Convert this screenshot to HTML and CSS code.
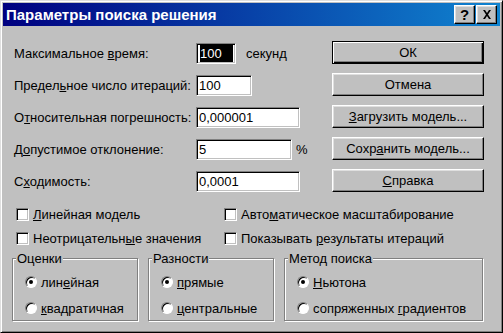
FILE: index.html
```html
<!DOCTYPE html>
<html lang="ru">
<head>
    <meta charset="UTF-8">
    <title>Параметры поиска решения</title>
    <link rel="stylesheet" href="styles.css">
</head>
<body>
    <div class="window">
        <div class="titlebar">
            <span class="title">Параметры поиска решения</span>
            <div class="title-buttons">
                <button class="title-btn">?</button>
                <button class="title-btn">
                    <svg width="10" height="9" viewBox="0 0 10 9">
                        <path d="M1 0h2l2 3 2-3h2L6 4.5 9 9H7L5 6 3 9H1l3-4.5z" fill="#000"/>
                    </svg>
                </button>
            </div>
        </div>

        <div class="content">
            <div class="params">
                <div class="fields">
                    <div class="field">
                        <span class="label">Максимальное <u>в</u>ремя:</span>
                        <span class="input w-time"><span class="selected">100</span></span>
                        <span class="unit">секунд</span>
                    </div>
                    <div class="field">
                        <span class="label">Предел<u>ь</u>ное число итераций:</span>
                        <span class="input w-iter">100</span>
                    </div>
                    <div class="field">
                        <span class="label">О<u>т</u>носительная погрешность:</span>
                        <span class="input w-wide">0,000001</span>
                    </div>
                    <div class="field">
                        <span class="label">Д<u>о</u>пустимое отклонение:</span>
                        <span class="input w-tol">5</span>
                        <span class="unit unit-pct">%</span>
                    </div>
                    <div class="field">
                        <span class="label">С<u>х</u>одимость:</span>
                        <span class="input w-wide">0,0001</span>
                    </div>
                </div>

                <div class="actions">
                    <button class="btn default">ОК</button>
                    <button class="btn">Отмена</button>
                    <button class="btn"><u>З</u>агрузить модель...</button>
                    <button class="btn">Сохр<u>а</u>нить модель...</button>
                    <button class="btn"><u>С</u>правка</button>
                </div>
            </div>

            <div class="options">
                <div class="check"><span class="box"></span><span><u>Л</u>инейная модель</span></div>
                <div class="check"><span class="box"></span><span>Авто<u>м</u>атическое масштабирование</span></div>
                <div class="check"><span class="box"></span><span>Неотрицательн<u>ы</u>е значения</span></div>
                <div class="check"><span class="box"></span><span>Показывать <u>р</u>езультаты итераций</span></div>
            </div>

            <div class="groups">
                <fieldset class="group">
                    <legend>Оценки</legend>
                    <div class="radio"><span class="dot checked"></span><span>лин<u>е</u>йная</span></div>
                    <div class="radio"><span class="dot"></span><span><u>к</u>вадратичная</span></div>
                </fieldset>
                <fieldset class="group">
                    <legend>Разности</legend>
                    <div class="radio"><span class="dot checked"></span><span><u>п</u>рямые</span></div>
                    <div class="radio"><span class="dot"></span><span><u>ц</u>ентральные</span></div>
                </fieldset>
                <fieldset class="group group-wide">
                    <legend>Метод поиска</legend>
                    <div class="radio"><span class="dot checked"></span><span><u>Н</u>ьютона</span></div>
                    <div class="radio"><span class="dot"></span><span>сопряженных <u>г</u>радиентов</span></div>
                </fieldset>
            </div>
        </div>
    </div>
</body>
</html>
```

FILE: styles.css
```css
* {
    box-sizing: border-box;
}

body {
    margin: 0;
    font-family: "Liberation Sans", Arial, sans-serif;
    font-size: 13px;
    color: #000;
    background-color: #c0c0c0;
}

u {
    text-decoration: underline;
    text-underline-offset: 1px;
}

.window {
    width: 503px;
    height: 333px;
    padding: 2px;
    background-color: #c0c0c0;
    border: 1px solid;
    border-color: #dfdfdf #000 #000 #dfdfdf;
    box-shadow: inset 1px 1px #fff, inset -1px -1px #808080;
}

.titlebar {
    display: flex;
    align-items: center;
    justify-content: space-between;
    height: 23px;
    padding: 0 3px 0 3px;
    background: linear-gradient(to right, #000080, #1084d0);
}

.title {
    color: #fff;
    font-weight: bold;
    font-size: 15px;
}

.title-buttons {
    display: flex;
    gap: 1px;
}

.title-btn {
    width: 21px;
    height: 19px;
    padding: 0;
    display: flex;
    align-items: center;
    justify-content: center;
    font-family: "Liberation Sans", Arial, sans-serif;
    font-weight: bold;
    font-size: 15px;
    background-color: #c0c0c0;
    border: 1px solid;
    border-color: #fff #000 #000 #fff;
    box-shadow: inset -1px -1px #808080, inset 1px 1px #dfdfdf;
}

.content {
    padding: 11px 0 0 11px;
}

.params {
    display: flex;
}

.fields {
    width: 318px;
}

.field {
    display: flex;
    align-items: center;
    height: 32px;
}

.label {
    width: 182px;
}

.input {
    height: 21px;
    padding: 0 2px;
    display: flex;
    align-items: center;
    background-color: #fff;
    border: 1px solid;
    border-color: #808080 #fff #fff #808080;
    box-shadow: inset 1px 1px #000, inset -1px -1px #c0c0c0;
}

.selected {
    flex: 1;
    height: 17px;
    line-height: 17px;
    margin-left: 1px;
    background-color: #000;
    color: #fff;
}

.w-time { width: 40px; }
.w-iter { width: 56px; }
.w-wide { width: 104px; }
.w-tol  { width: 96px; }

.unit {
    margin-left: 10px;
}

.unit-pct {
    margin-left: 4px;
}

.actions {
    width: 152px;
    display: flex;
    flex-direction: column;
}

.btn {
    height: 23px;
    margin: 4px 0 5px;
    padding: 0;
    font-family: "Liberation Sans", Arial, sans-serif;
    font-size: 13px;
    color: #000;
    background-color: #c0c0c0;
    border: 1px solid;
    border-color: #fff #000 #000 #fff;
    box-shadow: inset -1px -1px #808080, inset 1px 1px #dfdfdf;
}

.btn.default {
    border-color: #000;
    box-shadow: inset 1px 1px #fff, inset -1px -1px #000, inset -2px -2px #808080;
}

.options {
    display: grid;
    grid-template-columns: 208px 1fr;
    grid-auto-rows: 24px;
    margin-top: 5px;
    padding-left: 2px;
}

.check {
    display: flex;
    align-items: center;
    gap: 4px;
}

.box {
    width: 13px;
    height: 13px;
    background-color: #fff;
    border: 1px solid;
    border-color: #808080 #fff #fff #808080;
    box-shadow: inset 1px 1px #000, inset -1px -1px #c0c0c0;
}

.groups {
    display: flex;
    gap: 10px;
    margin-top: 1px;
    margin-left: -2px;
}

.group {
    width: 126px;
    height: 70px;
    margin: 0;
    padding: 3px 0 0 12px;
    border: 1px solid #808080;
    box-shadow: inset 1px 1px #fff, 1px 1px #fff;
}

.group-wide {
    width: 199px;
}

.group legend {
    margin-left: -9px;
    padding: 0 1px;
    background-color: #c0c0c0;
    line-height: 15px;
}

.radio {
    display: flex;
    align-items: center;
    gap: 4px;
    height: 26px;
}

.dot {
    width: 12px;
    height: 12px;
    border-radius: 50%;
    background-color: #fff;
    border: 1px solid;
    border-color: #808080 #fff #fff #808080;
    box-shadow: inset 1px 1px #000;
    display: flex;
    align-items: center;
    justify-content: center;
}

.dot.checked::after {
    content: '';
    width: 4px;
    height: 4px;
    border-radius: 50%;
    background-color: #000;
}
```
